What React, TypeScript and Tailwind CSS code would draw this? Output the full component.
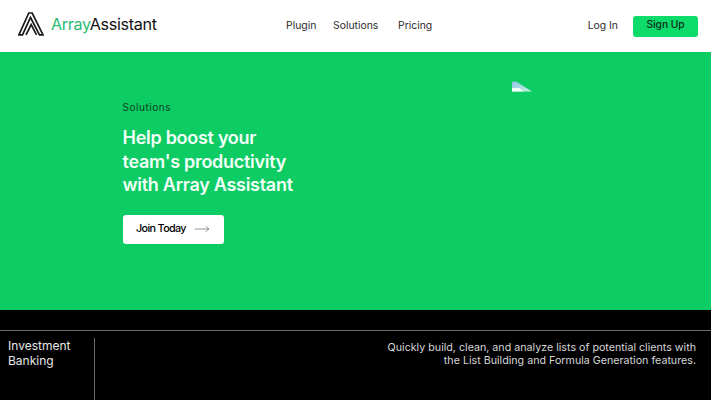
import { MoveRight } from "lucide-react";

function Logo() {
  return (
    <svg width="26" height="24" viewBox="0 0 26 24" fill="none" stroke="#1a1a1a" strokeWidth="1.7" className="shrink-0 mb-[4px]">
      <path d="M0.9 22.8 L10.8 1 L14.2 1 L25 22.8 L21.5 22.8 L12.5 5.5 L4.5 22.8 Z" />
      <path d="M8 22.8 L13.2 12.5 L18.5 22.8" />
    </svg>
  );
}

export default function App() {
  return (
    <div className="w-[711px] h-[400px] overflow-hidden flex flex-col bg-black font-['Inter',sans-serif]">
      <header className="h-[52px] shrink-0 bg-white flex items-center pl-[18px] pr-[13px]">
        <div className="w-[268px] flex items-center gap-[7px]">
          <Logo />
          <span className="mb-[3px] text-[16.2px] leading-none tracking-[-0.35px] text-[#111]">
            <span className="text-[#2dbb74]">Array</span>Assistant
          </span>
        </div>
        <nav className="flex items-center text-[10.4px] text-[#2a2a2a]">
          <span className="w-[47px]">Plugin</span>
          <span className="w-[65px]">Solutions</span>
          <span>Pricing</span>
        </nav>
        <div className="ml-auto flex items-center gap-[15px]">
          <span className="text-[10.4px] text-[#2a2a2a]">Log In</span>
          <button className="w-[65px] h-[21px] pb-[2px] rounded-[3px] bg-[#0ddc6a] text-[10.2px] font-medium text-[#0a2a18] flex items-center justify-center">
            Sign Up
          </button>
        </div>
      </header>

      <section className="relative h-[258px] shrink-0 bg-[#0dcc64] pl-[122.5px] pt-[49px]">
        <p className="text-[10px] leading-[13px] tracking-[0.55px] text-[#0a3f22]">Solutions</p>
        <h1 className="mt-[12px] text-[18px] leading-[23.5px] font-semibold tracking-[-0.28px] text-[#f2fff8]">
          Help boost your
          <br />
          team's productivity
          <br />
          with Array Assistant
        </h1>
        <button className="mt-[18px] w-[101px] h-[29px] rounded-[3px] bg-white flex items-center pl-[13.5px] gap-[8px] text-[10.8px] font-medium tracking-[-0.65px] text-black">
          Join Today
          <MoveRight size={16} strokeWidth={0.8} className="text-[#333]" />
        </button>
        <svg width="21" height="11" viewBox="0 0 21 11" className="absolute left-[511px] top-[29px]">
          <defs>
            <linearGradient id="shard" x1="0" y1="0" x2="1" y2="1">
              <stop offset="0" stopColor="#8fc4ea" />
              <stop offset="1" stopColor="#c8f5dc" />
            </linearGradient>
          </defs>
          <path d="M1 1 L5 0.5 L21 10.5 L1 10.5 Z" fill="url(#shard)" />
          <path d="M1 7 L8 7 L13 10.5 L1 10.5 Z" fill="#f2fff8" />
        </svg>
      </section>

      <section className="flex-1 bg-black pt-[20px]">
        <div className="border-t border-[#6a6a6a] flex h-full pt-[7px]">
          <div className="w-[95px] shrink-0 border-r border-[#6a6a6a] pl-[8px] text-[12px] leading-[15px] text-[#e8e8e8]">
            Investment
            <br />
            Banking
          </div>
          <p className="flex-1 pt-[3px] pr-[15px] text-right text-[10.7px] leading-[13.3px] text-[#d6d6d6]">
            Quickly build, clean, and analyze lists of potential clients with
            <br />
            the List Building and Formula Generation features.
          </p>
        </div>
      </section>
    </div>
  );
}
